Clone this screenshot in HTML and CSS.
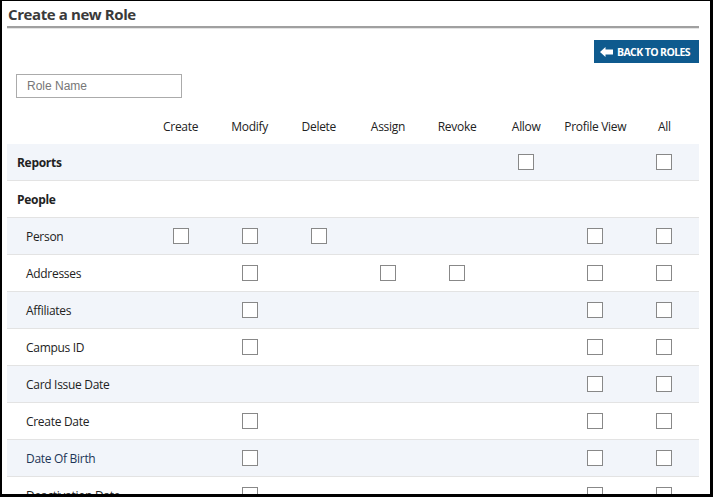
FILE: index.html
```html
<!DOCTYPE html>
<html>
<head>
<meta charset="utf-8">
<link rel="stylesheet" href="styles.css">
</head>
<body>
<div class="frame">
  <div class="page">
    <h1 class="title">Create a new Role</h1>
    <div class="actions">
      <button class="back-btn">
        <svg class="back-icon" width="13" height="10" viewBox="0 0 13 10"><path d="M0 5 L5.5 0 L5.5 2.6 L13 2.6 L13 7.4 L5.5 7.4 L5.5 10 Z" fill="#fff"/></svg>
        BACK TO ROLES
      </button>
    </div>
    <div class="name-row">
      <input class="role-name" type="text" placeholder="Role Name">
    </div>
    <div class="perm-table">
      <div class="row head">
        <div class="label"></div>
        <div class="cell">Create</div>
        <div class="cell">Modify</div>
        <div class="cell">Delete</div>
        <div class="cell">Assign</div>
        <div class="cell">Revoke</div>
        <div class="cell">Allow</div>
        <div class="cell">Profile View</div>
        <div class="cell">All</div>
      </div>
      <div class="body">
        <div class="row section">
          <div class="label">Reports</div>
          <div class="cell"></div><div class="cell"></div><div class="cell"></div><div class="cell"></div><div class="cell"></div>
          <div class="cell"><input type="checkbox" class="cb"></div>
          <div class="cell"></div>
          <div class="cell"><input type="checkbox" class="cb"></div>
        </div>
        <div class="row section">
          <div class="label">People</div>
          <div class="cell"></div><div class="cell"></div><div class="cell"></div><div class="cell"></div><div class="cell"></div><div class="cell"></div><div class="cell"></div><div class="cell"></div>
        </div>
        <div class="row sub">
          <div class="label">Person</div>
          <div class="cell"><input type="checkbox" class="cb"></div>
          <div class="cell"><input type="checkbox" class="cb"></div>
          <div class="cell"><input type="checkbox" class="cb"></div>
          <div class="cell"></div><div class="cell"></div><div class="cell"></div>
          <div class="cell"><input type="checkbox" class="cb"></div>
          <div class="cell"><input type="checkbox" class="cb"></div>
        </div>
        <div class="row sub">
          <div class="label">Addresses</div>
          <div class="cell"></div>
          <div class="cell"><input type="checkbox" class="cb"></div>
          <div class="cell"></div>
          <div class="cell"><input type="checkbox" class="cb"></div>
          <div class="cell"><input type="checkbox" class="cb"></div>
          <div class="cell"></div>
          <div class="cell"><input type="checkbox" class="cb"></div>
          <div class="cell"><input type="checkbox" class="cb"></div>
        </div>
        <div class="row sub">
          <div class="label">Affiliates</div>
          <div class="cell"></div>
          <div class="cell"><input type="checkbox" class="cb"></div>
          <div class="cell"></div><div class="cell"></div><div class="cell"></div><div class="cell"></div>
          <div class="cell"><input type="checkbox" class="cb"></div>
          <div class="cell"><input type="checkbox" class="cb"></div>
        </div>
        <div class="row sub">
          <div class="label">Campus ID</div>
          <div class="cell"></div>
          <div class="cell"><input type="checkbox" class="cb"></div>
          <div class="cell"></div><div class="cell"></div><div class="cell"></div><div class="cell"></div>
          <div class="cell"><input type="checkbox" class="cb"></div>
          <div class="cell"><input type="checkbox" class="cb"></div>
        </div>
        <div class="row sub">
          <div class="label">Card Issue Date</div>
          <div class="cell"></div><div class="cell"></div><div class="cell"></div><div class="cell"></div><div class="cell"></div><div class="cell"></div>
          <div class="cell"><input type="checkbox" class="cb"></div>
          <div class="cell"><input type="checkbox" class="cb"></div>
        </div>
        <div class="row sub">
          <div class="label">Create Date</div>
          <div class="cell"></div>
          <div class="cell"><input type="checkbox" class="cb"></div>
          <div class="cell"></div><div class="cell"></div><div class="cell"></div><div class="cell"></div>
          <div class="cell"><input type="checkbox" class="cb"></div>
          <div class="cell"><input type="checkbox" class="cb"></div>
        </div>
        <div class="row sub">
          <div class="label link">Date Of Birth</div>
          <div class="cell"></div>
          <div class="cell"><input type="checkbox" class="cb"></div>
          <div class="cell"></div><div class="cell"></div><div class="cell"></div><div class="cell"></div>
          <div class="cell"><input type="checkbox" class="cb"></div>
          <div class="cell"><input type="checkbox" class="cb"></div>
        </div>
        <div class="row sub">
          <div class="label">Deactivation Date</div>
          <div class="cell"></div>
          <div class="cell"><input type="checkbox" class="cb"></div>
          <div class="cell"></div><div class="cell"></div><div class="cell"></div><div class="cell"></div>
          <div class="cell"><input type="checkbox" class="cb"></div>
          <div class="cell"><input type="checkbox" class="cb"></div>
        </div>
      </div>
    </div>
  </div>
</div>
</body>
</html>
```

FILE: styles.css
```css
html, body {
  margin: 0;
  padding: 0;
  background: #fff;
}

.frame {
  box-sizing: border-box;
  width: 713px;
  height: 497px;
  border-style: solid;
  border-color: #000;
  border-width: 1px 3px 3px 2px;
  overflow: hidden;
  font-family: "Open Sans", "Noto Sans", sans-serif;
  color: #222;
}

.page {
  padding: 0 11px 0 5px;
}

.title {
  margin: 0;
  padding: 4px 0 3px 1px;
  font-size: 15px;
  font-weight: 700;
  letter-spacing: -0.4px;
  color: #3a3a3a;
  line-height: 18px;
  border-bottom: 2px solid #a0a0a0;
  box-shadow: 0 1px 0 #e4e4e4;
}

.actions {
  display: flex;
  justify-content: flex-end;
  padding-top: 12px;
}

.back-btn {
  display: flex;
  align-items: center;
  gap: 4px;
  height: 23px;
  width: 105px;
  padding: 0 0 0 6px;
  border: none;
  background: #0e5a8e;
  color: #fff;
  font-family: "Open Sans", sans-serif;
  font-weight: 700;
  font-size: 10.5px;
  letter-spacing: -0.6px;
  cursor: pointer;
}

.back-icon {
  flex: none;
}

.name-row {
  padding: 10px 0 0 9px;
}

.role-name {
  box-sizing: border-box;
  width: 166px;
  height: 24px;
  border: 1px solid #ababab;
  padding: 0 10px;
  font-family: "Liberation Sans", Arial, sans-serif;
  font-size: 12px;
  color: #333;
  outline: none;
}

.role-name::placeholder {
  color: #777;
}

.perm-table {
  margin-top: 10px;
  font-size: 12px;
  letter-spacing: -0.3px;
}

.row {
  display: grid;
  grid-template-columns: 139px repeat(8, 1fr);
  align-items: center;
  height: 36px;
}

.row.head {
  height: 36px;
}

.body .row {
  border-bottom: 1px solid #e3e3e3;
}

.body .row:nth-child(odd) {
  background: #f2f5fa;
}

.cell {
  display: flex;
  justify-content: center;
  align-items: center;
  text-align: center;
  white-space: nowrap;
}

.label {
  padding-left: 10px;
  white-space: nowrap;
}

.section .label {
  font-weight: 700;
}

.sub .label {
  padding-left: 19px;
}

.label.link {
  color: #1d3557;
}

.cb {
  appearance: none;
  -webkit-appearance: none;
  margin: 0;
  width: 16px;
  height: 16px;
  border: 1px solid #888;
  background: #fff;
  box-sizing: border-box;
}
```
